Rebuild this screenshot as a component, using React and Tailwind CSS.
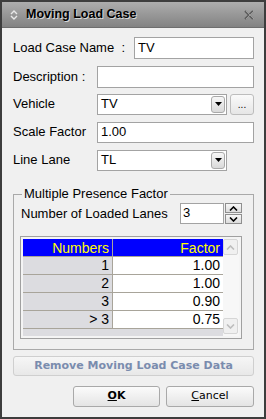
import React from 'react';

const FONT = { fontFamily: '"Liberation Sans", Arial, sans-serif' };
const UI_FONT = { fontFamily: '"DejaVu Sans", Verdana, sans-serif' };

const rows = [
    { n: '1', f: '1.00' },
    { n: '2', f: '1.00' },
    { n: '3', f: '0.90' },
    { n: '> 3', f: '0.75' },
];

const DropArrow = () => (
    <div className="w-[14px] h-[17px] mr-[1px] rounded-[3px] border border-[#a9a9a9] bg-gradient-to-b from-[#f7f7f7] to-[#d9d9d9] flex items-center justify-center">
        <svg width="7" height="4" viewBox="0 0 7 4"><path d="M0 0H7L3.5 4Z" fill="#000" /></svg>
    </div>
);

const Chevron = ({ up, color = '#000' }) => (
    <svg width="9" height="5" viewBox="0 0 9 5">
        <path d={up ? 'M1 4.5L4.5 1L8 4.5' : 'M1 0.5L4.5 4L8 0.5'} fill="none" stroke={color} strokeWidth="1.6" />
    </svg>
);

const TextBox = ({ value, className = '' }) => (
    <div className={`h-[22px] bg-white border border-[#a3a3a3] flex items-center pl-[3px] text-[13px] text-black ${className}`}>
        {value}
    </div>
);

const Combo = ({ value }) => (
    <div className="h-[21px] w-[130px] bg-white border border-[#a3a3a3] flex items-center justify-between pl-[3px] text-[13px] text-black">
        <span>{value}</span>
        <DropArrow />
    </div>
);

const App = () => {
    return (
        <div className="w-[266px] h-[419px] bg-[#f0f0f0] border-2 border-[#3d3d3d] flex flex-col overflow-hidden" style={FONT}>
            {/* title bar */}
            <div className="h-[26px] shrink-0 bg-gradient-to-b from-[#adadad] to-[#838383] border-b border-[#6e6e6e] flex items-center pl-[8px] pr-[10px]">
                <svg width="8" height="10" viewBox="0 0 8 10" className="mr-[8px]">
                    <path d="M1 4L4 1L7 4" fill="none" stroke="#e8e8e8" strokeWidth="1.4" />
                    <path d="M1 6L4 9L7 6" fill="none" stroke="#e8e8e8" strokeWidth="1.4" />
                </svg>
                <span className="text-[12.5px] font-bold text-black [text-shadow:1px_1px_0_#d8d8d8]">
                    Moving Load Case
                </span>
                <svg width="10" height="10" viewBox="0 0 10 10" className="ml-auto">
                    <path d="M1 1L9 9M9 1L1 9" stroke="#5e5e5e" strokeWidth="2" />
                    <path d="M2 1L10 9M10 1L2 9" stroke="#a8a8a8" strokeWidth="0.8" />
                </svg>
            </div>

            {/* body */}
            <div className="flex-1 flex flex-col pl-[11px] pr-[10px] pt-[9px]">
                <div className="flex items-center h-[22px]">
                    <span className="text-[13px] w-[121px]">Load Case Name&nbsp; :</span>
                    <TextBox value="TV" className="flex-1" />
                </div>
                <div className="flex items-center h-[22px] mt-[7px]">
                    <span className="text-[13px] w-[84px]">Description :</span>
                    <TextBox value="" className="flex-1" />
                </div>
                <div className="flex items-center h-[22px] mt-[5px]">
                    <span className="text-[13px] w-[84px]">Vehicle</span>
                    <Combo value="TV" />
                    <div className="ml-[3px] w-[24px] h-[21px] rounded-[3px] border border-[#bdbdbd] bg-gradient-to-b from-[#fafafa] to-[#e6e6e6] flex items-end justify-center pb-[4px] text-[10px] leading-none">
                        ...
                    </div>
                </div>
                <div className="flex items-center h-[22px] mt-[6px]">
                    <span className="text-[13px] w-[84px]">Scale Factor</span>
                    <TextBox value="1.00" className="flex-1 !h-[21px]" />
                </div>
                <div className="flex items-center h-[22px] mt-[6px]">
                    <span className="text-[13px] w-[84px]">Line Lane</span>
                    <Combo value="TL" />
                </div>

                {/* group box */}
                <fieldset className="mt-[16px] border border-[#a9a9a9] h-[163px] px-[6px] pb-[9px] flex flex-col">
                    <legend className="text-[13px] px-[2px] ml-[2px] leading-[14px]">Multiple Presence Factor</legend>
                    <div className="flex items-center h-[21px] mt-[2px] pl-[1px]">
                        <span className="text-[13px] w-[159px]">Number of Loaded Lanes</span>
                        <div className="w-[44px] h-[21px] bg-white border border-[#a3a3a3] text-[13px] pl-[2px] leading-[18px]">3</div>
                        <div className="flex flex-col gap-[1px] ml-[1px]">
                            <div className="w-[17px] h-[10px] border border-[#8f8f8f] bg-gradient-to-b from-[#f8f8f8] to-[#dcdcdc] flex items-center justify-center">
                                <Chevron up />
                            </div>
                            <div className="w-[17px] h-[10px] border border-[#8f8f8f] bg-gradient-to-b from-[#f8f8f8] to-[#dcdcdc] flex items-center justify-center">
                                <Chevron />
                            </div>
                        </div>
                    </div>

                    {/* grid */}
                    <div className="mt-[12px] w-[222px] h-[103px] border border-[#a0a0a0] bg-[#f4f4f4] p-[2px] flex">
                        <div className="flex-1 bg-[#dcdce0] flex flex-col">
                            <div className="flex h-[18px] bg-[#0000ff] text-[#ffff00] text-[14px] leading-[18px] border-b border-[#a8a49a]">
                                <div className="w-[90px] text-right pr-[3px] border-r border-[#a8a49a]">Numbers</div>
                                <div className="flex-1 text-right pr-[3px]">Factor</div>
                            </div>
                            {rows.map((r) => (
                                <div key={r.n} className="flex h-[18px] text-[14px] leading-[17px] border-b border-[#a8a49a]">
                                    <div className="w-[90px] text-right pr-[3px] border-r border-[#a8a49a] bg-[#dcdce0]">{r.n}</div>
                                    <div className="flex-1 text-right pr-[3px] bg-white">{r.f}</div>
                                </div>
                            ))}
                        </div>
                        <div className="w-[16px] bg-[#f7f7f7] flex flex-col justify-between">
                            <div className="h-[16px] w-[15px] rounded-[2px] border border-[#d6d6d6] bg-[#f0f0f0] flex items-center justify-center">
                                <Chevron up color="#bdbdbd" />
                            </div>
                            <div className="h-[16px] w-[15px] mb-[2px] rounded-[2px] border border-[#d6d6d6] bg-[#f0f0f0] flex items-center justify-center">
                                <Chevron color="#bdbdbd" />
                            </div>
                        </div>
                    </div>
                </fieldset>

                <div className="mt-[6px] h-[20px] rounded-[3px] border border-[#cfcfcf] bg-gradient-to-b from-[#f6f6f6] to-[#e8e8e8] flex items-center justify-center text-[11px] font-bold text-[#7a8cae]" style={UI_FONT}>
                    Remove Moving Load Case Data
                </div>

                <div className="mt-[10px] flex justify-end gap-[6px]">
                    <div className="w-[87px] h-[21px] rounded-[3px] border border-[#a9a9a9] bg-gradient-to-b from-[#fbfbfb] to-[#e4e4e4] flex items-center justify-center text-[11px] font-bold text-black" style={UI_FONT}>
                        <span><span className="underline">O</span>K</span>
                    </div>
                    <div className="w-[88px] h-[21px] rounded-[3px] border border-[#a9a9a9] bg-gradient-to-b from-[#fbfbfb] to-[#e4e4e4] flex items-center justify-center text-[11px] text-black" style={UI_FONT}>
                        <span><span className="underline">C</span>ancel</span>
                    </div>
                </div>
            </div>
        </div>
    );
};

export default App;
